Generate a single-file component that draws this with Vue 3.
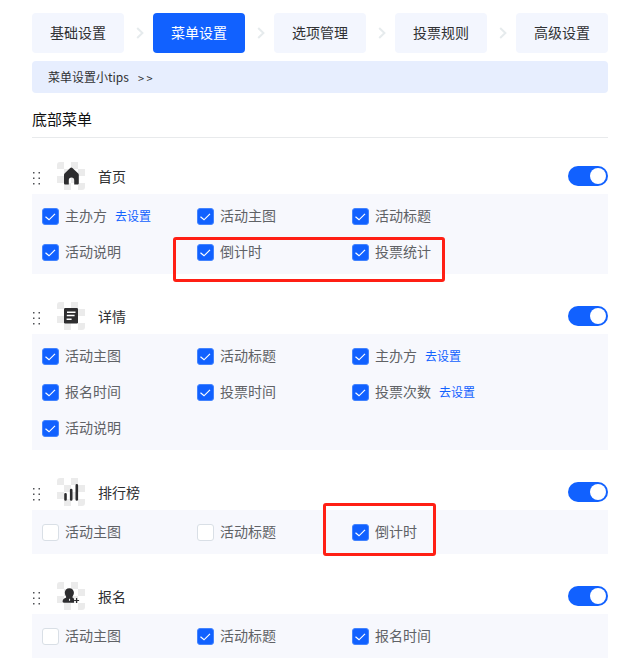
<script setup>
import { reactive, ref } from 'vue'

const steps = ['基础设置', '菜单设置', '选项管理', '投票规则', '高级设置']
const current = ref(1)

const opt = (label, checked = true, link = false) => ({ label, checked, link })

const sections = reactive([
  {
    id: 'home',
    title: '首页',
    enabled: true,
    mark: 'mark-home',
    options: [
      opt('主办方', true, true),
      opt('活动主图'),
      opt('活动标题'),
      opt('活动说明'),
      opt('倒计时'),
      opt('投票统计'),
    ],
  },
  {
    id: 'detail',
    title: '详情',
    enabled: true,
    options: [
      opt('活动主图'),
      opt('活动标题'),
      opt('主办方', true, true),
      opt('报名时间'),
      opt('投票时间'),
      opt('投票次数', true, true),
      opt('活动说明'),
    ],
  },
  {
    id: 'rank',
    title: '排行榜',
    enabled: true,
    mark: 'mark-rank',
    options: [opt('活动主图', false), opt('活动标题', false), opt('倒计时')],
  },
  {
    id: 'signup',
    title: '报名',
    enabled: true,
    options: [opt('活动主图', false), opt('活动标题'), opt('报名时间')],
  },
])
</script>

<template>
  <main class="page">
    <nav class="steps">
      <template v-for="(step, i) in steps" :key="step">
        <svg v-if="i" class="arrow" viewBox="0 0 8 12" aria-hidden="true">
          <path d="M1.2 1 6.4 6 1.2 11" />
        </svg>
        <button type="button" class="step" :class="{ active: i === current }" @click="current = i">
          {{ step }}
        </button>
      </template>
    </nav>

    <a class="tips" href="#tips"><span>菜单设置小tips</span><span class="more">&gt; &gt;</span></a>

    <h2 class="heading">底部菜单</h2>

    <section v-for="s in sections" :key="s.id" class="section">
      <header class="head">
        <svg class="drag" viewBox="0 0 8 14" aria-hidden="true">
          <path
            d="M1 1h1.5v1.5H1zM6.5 1H8v1.5H6.5zM1 6.5h1.5V8H1zM6.5 6.5H8V8H6.5zM1 12h1.5v1.5H1zM6.5 12H8v1.5H6.5z"
          />
        </svg>
        <span class="thumb">
          <svg viewBox="0 0 28 28" aria-hidden="true">
            <path
              v-if="s.id === 'home'"
              d="M13.2 6.1a1.6 1.6 0 0 1 2.2 0l5.6 5.2c.5.5.8 1 .8 1.7v8.2c0 .8-.6 1.4-1.4 1.4h-3.2v-4.4a2.7 2.7 0 0 0-5.4 0v4.4H8.4c-.8 0-1.4-.6-1.4-1.4V13c0-.7.3-1.2.8-1.7z"
            />
            <g v-else-if="s.id === 'detail'">
              <rect x="7" y="6" width="14" height="15.5" rx="1.2" />
              <path class="lines" d="M10 10.2h8.5M9.8 13.5h7.8M9.6 17.2h5" />
            </g>
            <path v-else-if="s.id === 'rank'" class="bars" d="M8.5 16.2v5.2M14.2 12v9.4M19.8 7.4v14" />
            <g v-else>
              <path
                d="M12.3 6.2c2.7 0 4.6 1.9 4.6 4.4 0 1.6-.6 2.9-1.3 3.8-.4.6-.2 1.1.4 1.4l1 1v3.9H7c-1 0-1.5-.5-1.4-1.4.1-1.6 1-2.7 2.7-3.4.8-.3 1.1-.8.7-1.5-.8-1-1.2-2.3-1.2-3.8 0-2.5 1.8-4.4 4.5-4.4z"
              />
              <path class="notch" d="M12.6 16.8v2" />
              <path class="plus" d="M19.6 16v5M17.1 18.5h5" />
            </g>
          </svg>
        </span>
        <h3 class="title">{{ s.title }}</h3>
        <input v-model="s.enabled" class="switch" type="checkbox" role="switch" :aria-label="s.title" />
      </header>

      <div class="panel">
        <div v-for="(o, i) in s.options" :key="i" class="option">
          <span class="check">
            <input :id="`${s.id}-${i}`" v-model="o.checked" type="checkbox" />
            <svg v-if="o.checked" viewBox="0 0 17 17" aria-hidden="true">
              <path d="M3.5 8.8 7 11.8 13 5.8" />
            </svg>
          </span>
          <label :for="`${s.id}-${i}`">{{ o.label }}</label>
          <a v-if="o.link" href="#settings">去设置</a>
        </div>
        <span v-if="s.mark" class="mark" :class="s.mark"></span>
      </div>
    </section>
  </main>
</template>

<style>
body {
  margin: 0;
  background: #fff;
}
</style>

<style scoped>
.page {
  padding: 13px 16px 3px 32px;
  font-family: "Noto Sans CJK SC", sans-serif;
  font-size: 14px;
  line-height: 20px;
  color: #303133;
}

.steps {
  display: flex;
  align-items: center;
  justify-content: space-between;
}

.step {
  height: 40px;
  padding: 0 18px 2px;
  border: 0;
  border-radius: 4px;
  background: #f3f6fe;
  color: #303133;
  font: inherit;
  cursor: pointer;
}

.step.active {
  background: #1161ff;
  color: #fff;
}

.arrow {
  width: 8px;
  height: 12px;
  margin-left: 3px;
  fill: none;
  stroke: #e6ebed;
  stroke-width: 2;
}

.tips {
  display: flex;
  align-items: center;
  gap: 9px;
  height: 32px;
  margin-top: 8px;
  padding: 0 16px;
  border-radius: 4px;
  background: #e7eefe;
  color: #303133;
  font-size: 12px;
  text-decoration: none;
}

.more {
  padding-top: 2px;
  font-size: 11px;
}

.heading {
  margin: 16px 0 0;
  padding-bottom: 8px;
  border-bottom: 1px solid #e8eaec;
  color: #111;
  font-size: 15px;
  font-weight: 400;
}

.section {
  margin-top: 28px;
}

.heading + .section {
  margin-top: 24px;
}

.head {
  display: flex;
  align-items: center;
  height: 28px;
  margin-bottom: 4px;
}

.drag {
  width: 8px;
  height: 14px;
  margin: 4px 17px 0 0;
  fill: #505256;
}

.thumb {
  width: 28px;
  height: 28px;
  border-radius: 3px;
  background: repeating-conic-gradient(#fff 0 25%, #ebebeb 0 50%) 0 0 / 14px 14px;
}

.thumb svg {
  display: block;
  fill: #2d2d2f;
}

.thumb .lines {
  stroke: #fff;
  stroke-width: 1.5;
}

.thumb .bars {
  stroke: #2d2d2f;
  stroke-width: 2.6;
  stroke-linecap: round;
}

.thumb .notch {
  stroke: #fff;
}

.thumb .plus {
  stroke: #2d2d2f;
  stroke-width: 1.2;
}

.title {
  flex: 1;
  margin: 0;
  padding-left: 13px;
  font-size: 14px;
  font-weight: 400;
}

.switch {
  appearance: none;
  box-sizing: border-box;
  width: 40px;
  height: 20px;
  margin: 0;
  padding: 2px;
  border-radius: 10px;
  background: #c8ccd4;
  cursor: pointer;
}

.switch::before {
  content: "";
  display: block;
  width: 16px;
  height: 16px;
  border-radius: 50%;
  background: #fff;
}

.switch:checked {
  background: #1161ff;
}

.switch:checked::before {
  margin-left: auto;
}

.panel {
  position: relative;
  display: grid;
  grid-template-columns: repeat(auto-fill, 155px);
  grid-auto-rows: 36px;
  padding: 4px 10px;
  background: #f7f8fd;
}

.option {
  display: flex;
  align-items: center;
  color: #606266;
  white-space: nowrap;
}

.option label {
  padding: 0 0 2px 6px;
}

.option a {
  margin-left: 8px;
  color: #1161ff;
  font-size: 12px;
  text-decoration: none;
}

.check {
  display: grid;
  width: 17px;
  height: 17px;
}

.check > * {
  grid-area: 1 / 1;
}

.check input {
  appearance: none;
  box-sizing: border-box;
  width: 17px;
  height: 17px;
  margin: 0;
  border: 1px solid #d9dfe6;
  border-radius: 3px;
  background: #fff;
}

.check input:checked {
  border-color: #4384ff;
  background: #1161ff;
}

.check svg {
  fill: none;
  stroke: #fff;
  stroke-width: 1.2;
  pointer-events: none;
}

.mark {
  position: absolute;
  box-sizing: border-box;
  border: 3px solid #ff1f14;
  border-radius: 3px;
  pointer-events: none;
}

.mark-home {
  top: 43px;
  left: 141px;
  width: 272px;
  height: 45px;
}

.mark-rank {
  top: -7px;
  left: 291px;
  width: 113px;
  height: 53px;
}
</style>
